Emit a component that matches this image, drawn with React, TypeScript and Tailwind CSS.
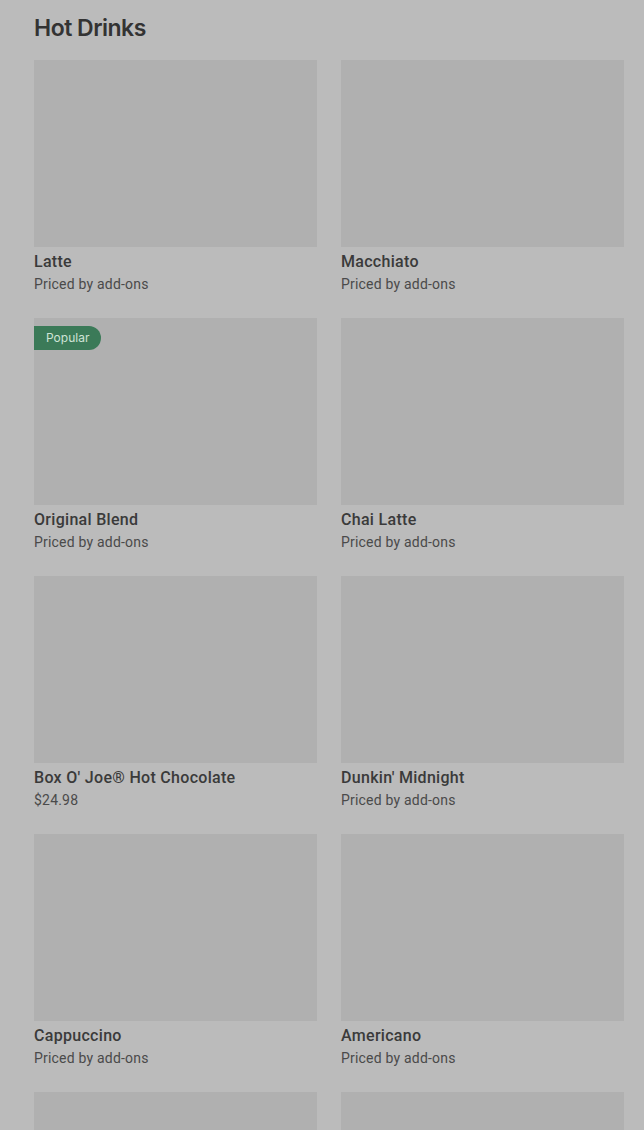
import React from "react";

const items: { name: string; sub: string; popular?: boolean }[] = [
  { name: "Latte", sub: "Priced by add-ons" },
  { name: "Macchiato", sub: "Priced by add-ons" },
  { name: "Original Blend", sub: "Priced by add-ons", popular: true },
  { name: "Chai Latte", sub: "Priced by add-ons" },
  { name: "Box O' Joe® Hot Chocolate", sub: "$24.98" },
  { name: "Dunkin' Midnight", sub: "Priced by add-ons" },
  { name: "Cappuccino", sub: "Priced by add-ons" },
  { name: "Americano", sub: "Priced by add-ons" },
  { name: "", sub: "" },
  { name: "", sub: "" },
];

export default function App() {
  return (
    <div
      className="w-[644px] h-[1130px] overflow-hidden bg-[#bbbbbb] pl-[34px] pr-[20px] text-[#333333]"
      style={{ fontFamily: "Inter, 'Noto Sans', sans-serif" }}
    >
      <h1 className="pt-[13px] h-[60px] text-[23px] font-semibold tracking-[-0.5px] text-[#333333] leading-[30px]">
        Hot Drinks
      </h1>
      <div className="grid grid-cols-2 gap-x-[24px] gap-y-[25px]">
        {items.map((it, i) => (
          <div key={i} className="flex flex-col">
            <div className="relative h-[187px] bg-[#b0b0b0]">
              {it.popular && (
                <div className="absolute left-0 top-[8px] h-[24px] px-[12px] flex items-center rounded-r-full bg-[#3b7a58] text-[12px] text-[#cfe3d6]">
                  Popular
                </div>
              )}
            </div>
            <div
              className="mt-[5px] text-[16px] font-medium leading-[20px] tracking-[0.3px] text-[#3a3a3a]"
              style={{ fontFamily: "Roboto, Inter, sans-serif" }}
            >
              {it.name}
            </div>
            <div
              className="mt-[3px] text-[14px] leading-[18px] tracking-[0.2px] text-[#4a4a4a]"
              style={{ fontFamily: "Roboto, Inter, sans-serif" }}
            >
              {it.sub}
            </div>
          </div>
        ))}
      </div>
    </div>
  );
}
